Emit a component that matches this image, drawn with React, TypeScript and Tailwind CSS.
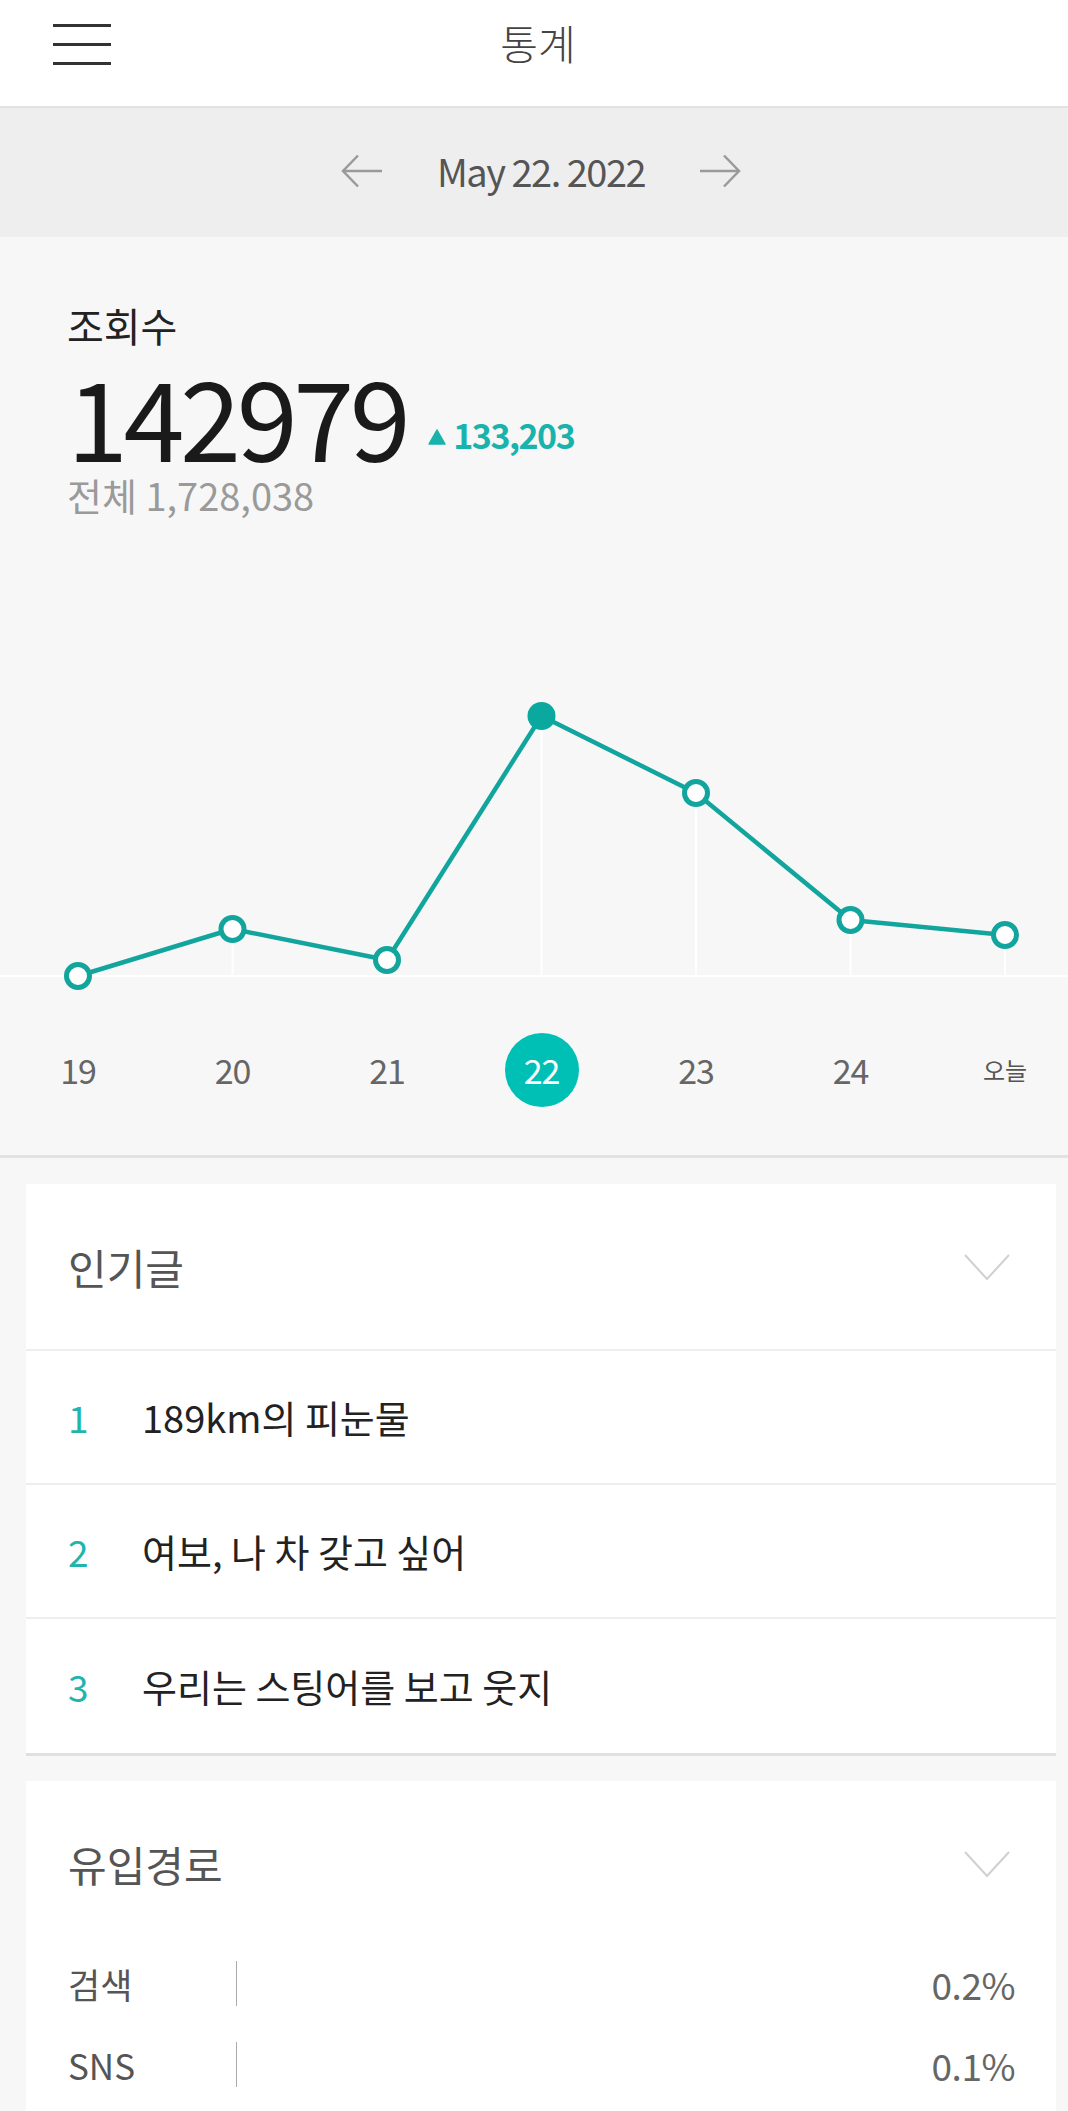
const FONT = "font-['Noto_Sans_CJK_KR','Noto_Sans',sans-serif]";

const points = [
  { label: "19", y: 446 },
  { label: "20", y: 399 },
  { label: "21", y: 430 },
  { label: "22", y: 186, active: true },
  { label: "23", y: 263 },
  { label: "24", y: 390 },
  { label: "오늘", y: 405, small: true },
];

const popular = ["189km의 피눈물", "여보, 나 차 갖고 싶어", "우리는 스팅어를 보고 웃지"];

const referrers = [
  { name: "검색", value: "0.2%" },
  { name: "SNS", value: "0.1%" },
];

function Arrow({ dir }: { dir: "left" | "right" }) {
  return (
    <svg width="42" height="34" viewBox="0 0 42 34" fill="none" stroke="#9a9a9a" strokeWidth="2.5">
      {dir === "left" ? (
        <path d="M41 17H2M17 1.5L2 17l15 15.5" />
      ) : (
        <path d="M1 17h39M25 1.5L40 17 25 32.5" />
      )}
    </svg>
  );
}

function Chevron() {
  return (
    <svg width="46" height="26" viewBox="0 0 46 26" fill="none" stroke="#d0d0d0" strokeWidth="2">
      <path d="M1 1l22 24L45 1" />
    </svg>
  );
}

function Chart() {
  const baseline = 446;
  const xs = points.map((_, i) => 78 + i * 154.5);
  const line = points.map((p, i) => `${xs[i]},${p.y}`).join(" ");
  return (
    <svg width="1068" height="460" viewBox="0 0 1068 460" className="mt-[15px] block overflow-visible">
      <line x1="0" y1={baseline} x2="1068" y2={baseline} stroke="#fff" strokeWidth="2" />
      {points.map((p, i) => (
        <line key={i} x1={xs[i]} y1={p.y} x2={xs[i]} y2={baseline} stroke="#fff" strokeWidth="2" />
      ))}
      <polyline points={line} fill="none" stroke="#12a59d" strokeWidth="4.5" strokeLinejoin="round" />
      {points.map((p, i) =>
        p.active ? (
          <circle key={i} cx={xs[i]} cy={p.y} r="14" fill="#0aa89f" />
        ) : (
          <circle key={i} cx={xs[i]} cy={p.y} r="11.5" fill="#fff" stroke="#12a59d" strokeWidth="5" />
        ),
      )}
    </svg>
  );
}

export default function App() {
  return (
    <div className={`w-[1068px] min-h-[2111px] bg-[#f7f7f7] ${FONT}`}>
      {/* Header */}
      <header className="h-[108px] bg-white border-b-2 border-[#e2e2e2]">
        <div className="grid h-[88px] grid-cols-[1fr_auto_1fr] items-center">
          <div className="flex flex-col gap-[16px] pl-[53px]">
            <span className="block h-[3px] w-[58px] bg-[#333]" />
            <span className="block h-[3px] w-[58px] bg-[#333]" />
            <span className="block h-[3px] w-[58px] bg-[#333]" />
          </div>
          <h1 className="-translate-y-[2px] pl-[8px] text-[41px] leading-[44px] font-light text-[#444]">통계</h1>
          <div />
        </div>
      </header>

      {/* Date selector */}
      <div className="flex h-[129px] items-center justify-center bg-[#eeeeee] pb-[3px] pl-[14px]">
        <Arrow dir="left" />
        <span className="mx-[54px] text-[38px] leading-[40px] tracking-[-1.5px] text-[#555]">
          May 22. 2022
        </span>
        <Arrow dir="right" />
      </div>

      {/* Stats */}
      <section className="border-b-[3px] border-[#e2e2e2] bg-[#f7f7f7] pb-[48px]">
        <div className="px-[67px] pt-[68px]">
          <p className="text-[40px] leading-[40px] text-[#222]">조회수</p>
          <div className="mt-[15px] flex items-baseline">
            <span className="text-[110px] leading-[108px] tracking-[-4.5px] text-[#1a1a1a]">142979</span>
            <span className="ml-[22px] flex -translate-y-[13px] items-baseline gap-[7px] text-[34px] font-bold leading-[40px] tracking-[-1.5px] text-[#19b3ad]">
              <svg width="18" height="16" viewBox="0 0 18 16" className="self-center translate-y-[2px]">
                <path d="M9 1L17 15H1z" fill="#19b3ad" strokeLinejoin="round" stroke="#19b3ad" strokeWidth="1.5" />
              </svg>
              133,203
            </span>
          </div>
          <p className="mt-[7px] text-[38px] leading-[40px] text-[#9a9a9a]">전체 1,728,038</p>
        </div>
        <Chart />
        <div className="mt-[43px] flex items-center justify-between pl-[41px] pr-[26px]">
          {points.map((p) => (
            <div key={p.label} className="flex h-[74px] w-[74px] items-center justify-center">
              {p.active ? (
                <span className="flex h-[74px] w-[74px] items-center justify-center rounded-full bg-[#00bfb5] text-[34px] leading-none tracking-[-1px] text-white">
                  {p.label}
                </span>
              ) : (
                <span
                  className={
                    p.small
                      ? "text-[24px] leading-none text-[#555]"
                      : "text-[34px] leading-none tracking-[-1px] text-[#666]"
                  }
                >
                  {p.label}
                </span>
              )}
            </div>
          ))}
        </div>
      </section>

      {/* Popular posts */}
      <div className="ml-[26px] mr-[12px] mt-[26px] border-b-[3px] border-[#e0e0e0] bg-white">
        <div className="flex h-[167px] items-center justify-between border-b-2 border-[#eeeeee] pl-[42px] pr-[46px]">
          <h2 className="text-[42px] leading-[44px] text-[#555]">인기글</h2>
          <Chevron />
        </div>
        {popular.map((title, i) => (
          <div
            key={title}
            className="flex h-[134px] items-center border-b-2 border-[#eeeeee] pl-[42px] last:border-b-0"
          >
            <span className="w-[74px] text-[37px] leading-[40px] text-[#1fb5ad]">{i + 1}</span>
            <span className="text-[38px] leading-[40px] text-[#222]">{title}</span>
          </div>
        ))}
      </div>

      {/* Referrers */}
      <div className="ml-[26px] mr-[12px] mt-[25px] bg-white pb-[40px]">
        <div className="flex items-center justify-between pl-[42px] pr-[46px] pt-[61px]">
          <h2 className="text-[42px] leading-[44px] text-[#555]">유입경로</h2>
          <Chevron />
        </div>
        <div className="mt-[75px] flex flex-col gap-[36px]">
          {referrers.map((r) => (
            <div key={r.name} className="flex h-[45px] items-center pl-[42px] pr-[41px]">
              <span className="w-[168px] text-[35px] leading-[40px] text-[#555]">{r.name}</span>
              <span className="h-full border-l border-[#aaa]" />
              <span className="flex-1" />
              <span className="text-[37px] leading-[40px] tracking-[-0.5px] text-[#666]">{r.value}</span>
            </div>
          ))}
        </div>
      </div>
    </div>
  );
}
